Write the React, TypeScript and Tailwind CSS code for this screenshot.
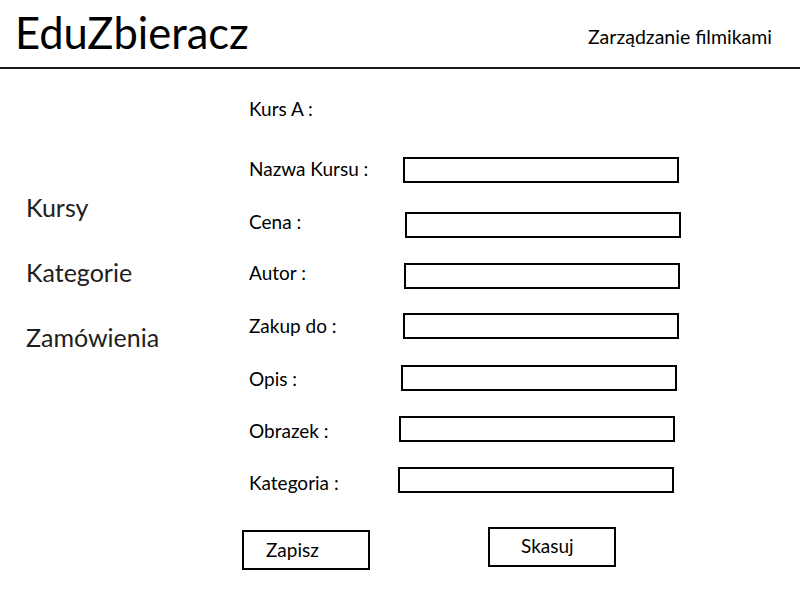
const fields = [
  { label: 'Nazwa Kursu :', row: 'mt-[37px]', box: 'ml-[154px]', nudge: 'mb-[2px]' },
  { label: 'Cena :', row: 'mt-[29px]', box: 'ml-[156px]', nudge: 'mb-[6px]' },
  { label: 'Autor :', row: 'mt-[25px]', box: 'ml-[155px]', nudge: 'mb-[6px]' },
  { label: 'Zakup do :', row: 'mt-[24px]', box: 'ml-[154px]', nudge: 'mb-[0px]' },
  { label: 'Opis :', row: 'mt-[26px]', box: 'ml-[152px]', nudge: 'mt-[2px]' },
  { label: 'Obrazek :', row: 'mt-[25px]', box: 'ml-[150px]', nudge: 'mt-[4px]' },
  { label: 'Kategoria :', row: 'mt-[25px]', box: 'ml-[149px]', nudge: 'mt-[6px]' },
]

type FieldProps = { label: string; row: string; box: string; nudge: string }

function Field({ label, row, box, nudge }: FieldProps) {
  return (
    <div className={`flex items-center h-[26px] ${row}`}>
      <span className={`w-[0px] whitespace-nowrap text-[19px] leading-[22px] ${nudge}`}>{label}</span>
      <div className={`w-[276px] h-[26px] border-2 border-black ${box}`} />
    </div>
  )
}

export default function App() {
  return (
    <div className="w-[800px] h-[600px] bg-white text-black font-['Lato',sans-serif]">
      <header className="h-[69px] border-b-2 border-[#1c1c1c] flex justify-between">
        <div className="pl-[15px] pt-[8px] text-[43.5px] leading-[48px]">EduZbieracz</div>
        <div className="pr-[28px] pt-[26px] text-[19.5px] leading-[22px]">Zarządzanie filmikami</div>
      </header>

      <div className="flex">
        <nav className="w-[249px] pl-[26px] pt-[123px] flex flex-col gap-[35px] text-[25px] leading-[30px] text-[#1e1e1e]">
          <div>Kursy</div>
          <div>Kategorie</div>
          <div>Zamówienia</div>
        </nav>

        <main className="flex flex-col">
          <div className="pt-[29px] text-[19px] leading-[22px]">Kurs A :</div>
          {fields.map((f) => (
            <Field key={f.label} {...f} />
          ))}
          <div className="flex mt-[37px] text-[19px]">
            <div className="-ml-[7px] w-[128px] h-[40px] border-2 border-black flex items-center pl-[22px]">Zapisz</div>
            <div className="ml-[118px] -mt-[3px] w-[128px] h-[40px] border-2 border-black flex items-center pl-[31px] pb-[2px]">Skasuj</div>
          </div>
        </main>
      </div>
    </div>
  )
}
